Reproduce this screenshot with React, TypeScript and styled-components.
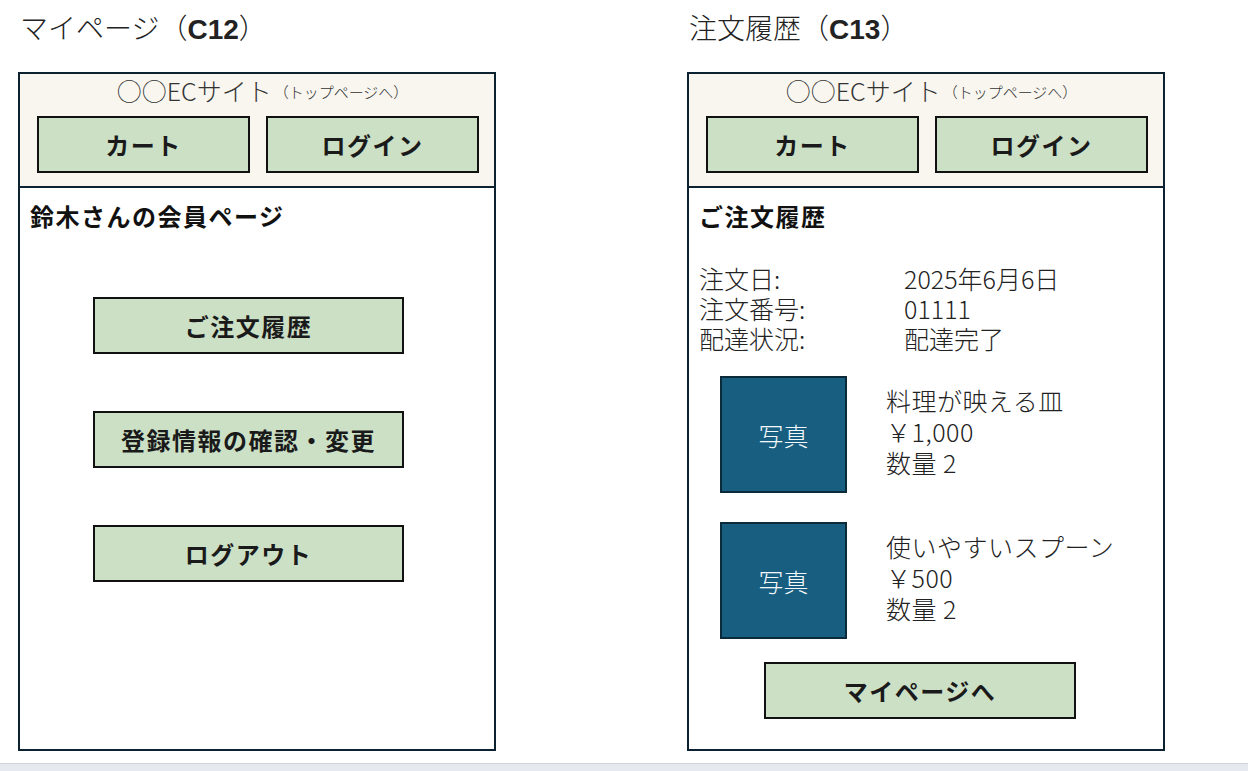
import React from 'react';
import styled, { createGlobalStyle } from 'styled-components';

const GlobalStyle = createGlobalStyle`
  html, body {
    margin: 0;
    padding: 0;
    background: #ffffff;
  }
  body {
    font-family: "Noto Sans CJK JP", "Noto Sans", sans-serif;
    color: #1a1a1a;
  }
`;

const Page = styled.div`
  min-height: 100vh;
  display: flex;
  flex-direction: column;
`;

const Screens = styled.div`
  display: flex;
  gap: 191px;
  padding-left: 18px;
`;

const Column = styled.div`
  width: 478px;
`;

const ScreenTitle = styled.h2`
  margin: 0;
  height: 72px;
  padding: 10px 0 0 2px;
  box-sizing: border-box;
  font-size: 28px;
  line-height: 34px;
  font-weight: 300;
  color: #222;

  b {
    font-family: "Liberation Sans", "Noto Sans CJK JP", sans-serif;
    font-weight: 700;
  }
`;

const Panel = styled.div`
  height: 679px;
  box-sizing: border-box;
  border: 2px solid #0d2230;
  display: flex;
  flex-direction: column;
`;

const Header = styled.header`
  height: 114px;
  flex-shrink: 0;
  box-sizing: border-box;
  background: #f8f6ef;
  border-bottom: 2px solid #0d2230;
  padding: 3px 14px 0 17px;
  display: flex;
  flex-direction: column;
`;

const SiteName = styled.div`
  height: 30px;
  flex-shrink: 0;
  display: flex;
  align-items: center;
  justify-content: center;
  font-size: 25px;
  font-weight: 300;
  color: #333;
  padding-left: 8px;
  margin: -2px 0 11px;

  small {
    font-size: 15px;
    margin: 3px 0 0 2px;
  }
`;

const NavRow = styled.div`
  display: grid;
  grid-template-columns: 213px 213px;
  gap: 16px;
  flex-shrink: 0;
`;

const GreenButton = styled.div<{ $width?: number }>`
  width: ${p => (p.$width ? `${p.$width}px` : 'auto')};
  height: 57px;
  flex-shrink: 0;
  box-sizing: border-box;
  border: 2px solid #111;
  background: #cce0c6;
  display: flex;
  align-items: center;
  justify-content: center;
  font-size: 24px;
  font-weight: 700;
  letter-spacing: 1.5px;
  color: #1a1a1a;
`;

const Body = styled.div`
  flex: 1;
  padding: 13px 0 0 10px;
  display: flex;
  flex-direction: column;
`;

const Heading = styled.div`
  font-size: 24px;
  line-height: 30px;
  font-weight: 700;
  letter-spacing: 1.5px;
  color: #111;
`;

const MenuList = styled.div`
  display: flex;
  flex-direction: column;
  gap: 57px;
  margin: 66px 0 0 63px;
`;

const InfoGrid = styled.div`
  display: grid;
  grid-template-columns: 205px auto;
  grid-auto-rows: 30px;
  margin-top: 32px;
  font-size: 25px;
  line-height: 30px;
  font-weight: 300;
  color: #222;
`;

const ItemList = styled.div`
  display: flex;
  flex-direction: column;
  gap: 29px;
  margin: 23px 0 0 21px;
`;

const Item = styled.div`
  display: flex;
  gap: 39px;
`;

const Photo = styled.div`
  width: 127px;
  height: 117px;
  box-sizing: border-box;
  background: #175e80;
  border: 2px solid #0b2a3a;
  color: #f4f8fb;
  display: flex;
  align-items: center;
  justify-content: center;
  font-size: 25px;
  font-weight: 300;
`;

const ItemText = styled.div`
  padding-top: 9px;
  font-size: 25px;
  line-height: 31px;
  font-weight: 300;
  letter-spacing: 0.5px;
  color: #222;
`;

const BackRow = styled.div`
  margin: 23px 0 0 65px;
`;

const Footer = styled.div`
  margin-top: auto;
  height: 7px;
  border-top: 1px solid #cfd3da;
  background: #e6e9ef;
`;

const SiteHeader: React.FC = () => (
  <Header>
    <SiteName>
      ○○ECサイト<small>（トップページへ）</small>
    </SiteName>
    <NavRow>
      <GreenButton>カート</GreenButton>
      <GreenButton>ログイン</GreenButton>
    </NavRow>
  </Header>
);

const items = [
  { name: '料理が映える皿', price: '￥1,000', qty: 2 },
  { name: '使いやすいスプーン', price: '￥500', qty: 2 }
];

const App: React.FC = () => {
  return (
    <Page>
      <GlobalStyle />
      <Screens>
        <Column>
          <ScreenTitle>
            マイページ（<b>C12</b>）
          </ScreenTitle>
          <Panel>
            <SiteHeader />
            <Body>
              <Heading>鈴木さんの会員ページ</Heading>
              <MenuList>
                <GreenButton $width={311}>ご注文履歴</GreenButton>
                <GreenButton $width={311}>登録情報の確認・変更</GreenButton>
                <GreenButton $width={311}>ログアウト</GreenButton>
              </MenuList>
            </Body>
          </Panel>
        </Column>
        <Column>
          <ScreenTitle>
            注文履歴（<b>C13</b>）
          </ScreenTitle>
          <Panel>
            <SiteHeader />
            <Body>
              <Heading>ご注文履歴</Heading>
              <InfoGrid>
                <span>注文日:</span>
                <span>2025年6月6日</span>
                <span>注文番号:</span>
                <span>01111</span>
                <span>配達状況:</span>
                <span>配達完了</span>
              </InfoGrid>
              <ItemList>
                {items.map(item => (
                  <Item key={item.name}>
                    <Photo>写真</Photo>
                    <ItemText>
                      {item.name}
                      <br />
                      {item.price}
                      <br />
                      数量 {item.qty}
                    </ItemText>
                  </Item>
                ))}
              </ItemList>
              <BackRow>
                <GreenButton $width={312}>マイページへ</GreenButton>
              </BackRow>
            </Body>
          </Panel>
        </Column>
      </Screens>
      <Footer />
    </Page>
  );
};

export default App;
